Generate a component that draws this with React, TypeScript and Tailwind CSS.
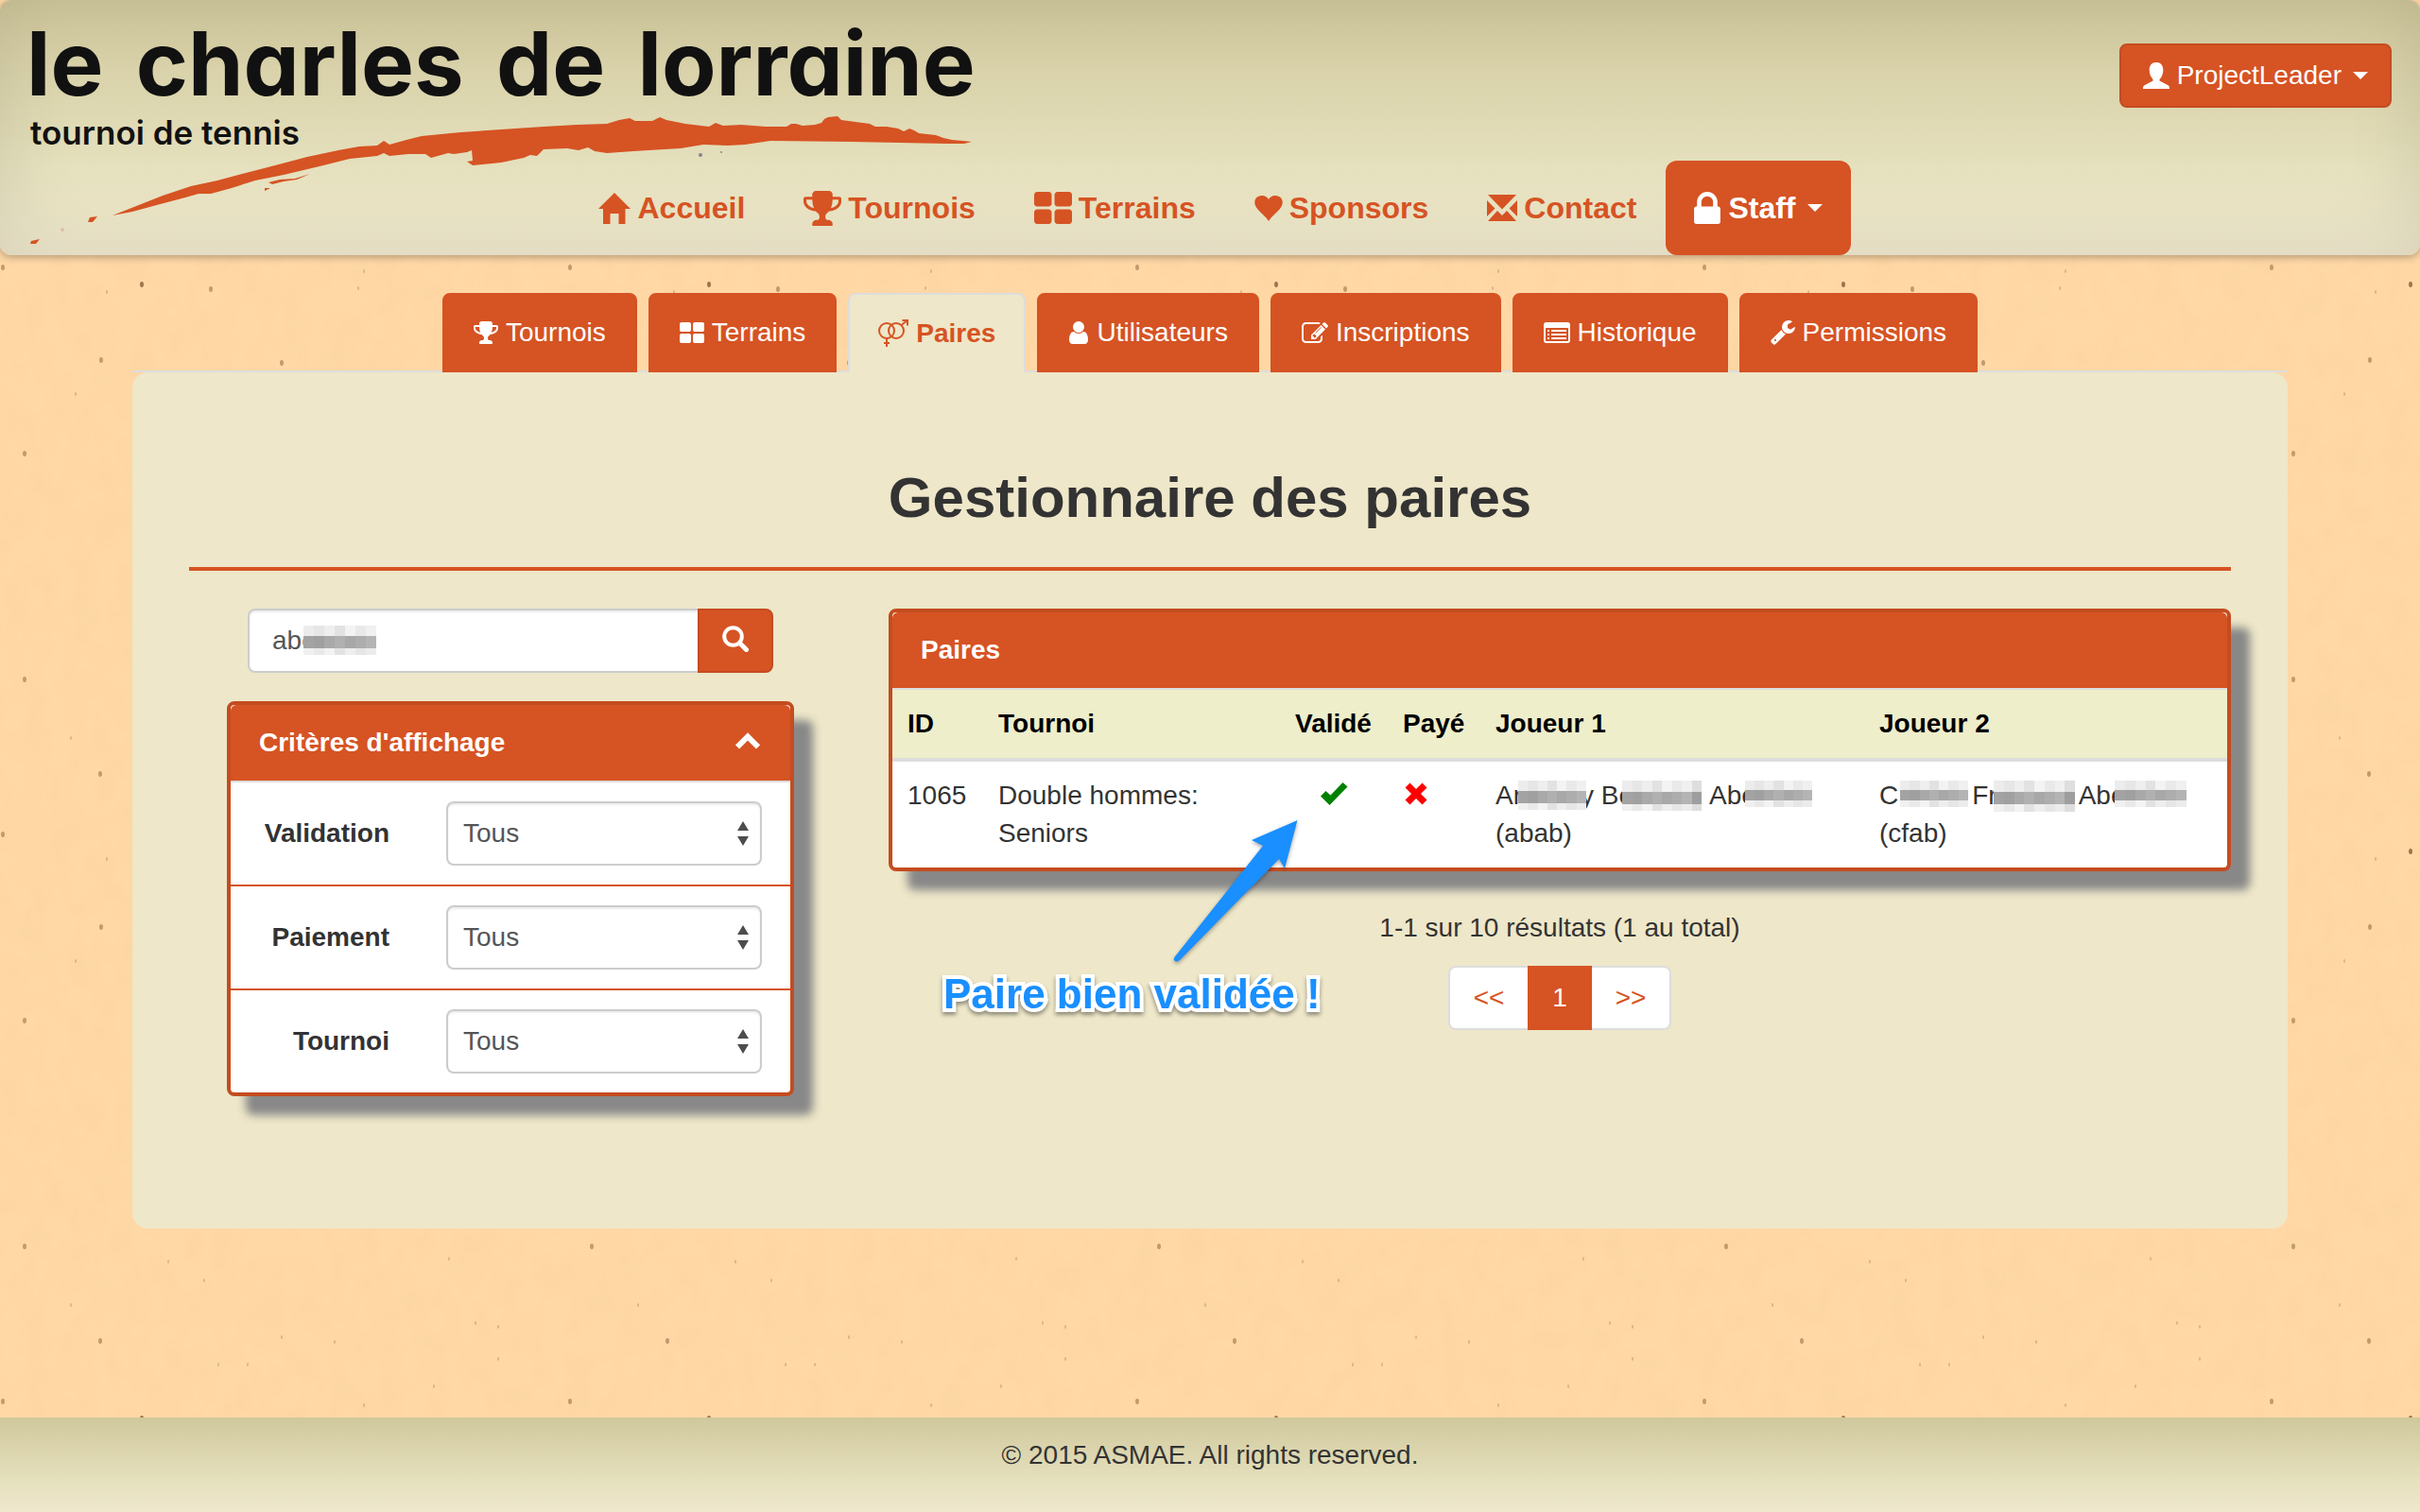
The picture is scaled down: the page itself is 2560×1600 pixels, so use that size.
import type { ReactNode } from "react";

const FA = {
  trophy:
    "M522 883q-74-162-74-371h-256v96q0 78 94.5 162t235.5 113zm1078-275v-96h-256q0 209-74 371 141-29 235.5-113t94.5-162zm128-128v128q0 71-41.500 143t-112 130-173 97.500-215.500 44.500q-42 54-95 95-38 34-52.500 72.500t-14.500 89.500q0 54 30.500 91t97.500 37q75 0 133.500 45.500t58.500 114.500v64q0 14-9 23t-23 9h-832q-14 0-23-9t-9-23v-64q0-69 58.500-114.500t133.500-45.500q67 0 97.500-37t30.500-91q0-51-14.500-89.500t-52.500-72.500q-53-41-95-95-113-5-215.500-44.500t-173-97.500-112-130-41.500-143v-128q0-40 28-68t68-28h288v-96q0-66 47-113t113-47h576q66 0 113 47t47 113v96h288q40 0 68 28t28 68z",
  grid:
    "M832 1024v384q0 52-38 90t-90 38h-512q-52 0-90-38t-38-90v-384q0-52 38-90t90-38h512q52 0 90 38t38 90zm0-768v384q0 52-38 90t-90 38h-512q-52 0-90-38t-38-90v-384q0-52 38-90t90-38h512q52 0 90 38t38 90zm896 768v384q0 52-38 90t-90 38h-512q-52 0-90-38t-38-90v-384q0-52 38-90t90-38h512q52 0 90 38t38 90zm0-768v384q0 52-38 90t-90 38h-512q-52 0-90-38t-38-90v-384q0-52 38-90t90-38h512q52 0 90 38t38 90z",
  lock:
    "M640 768h512v-192q0-106-75-181t-181-75-181 75-75 181v192zm832 96v576q0 40-28 68t-68 28h-960q-40 0-68-28t-28-68v-576q0-40 28-68t68-28h32v-192q0-184 132-316t316-132 316 132 132 316v192h32q40 0 68 28t28 68z",
  user:
    "M1536 1399q0 109-62.500 187t-150.500 78h-854q-88 0-150.500-78t-62.500-187q0-85 8.500-160.500t31.500-152 58.500-131 94-89 134.500-34.500q131 128 313 128t313-128q76 0 134.500 34.500t94 89 58.500 131 31.500 152 8.500 160.500zm-256-887q0 159-112.500 271.500t-271.500 112.500-271.500-112.500-112.500-271.500 112.500-271.500 271.500-112.500 271.500 112.500 112.500 271.500z",
  wrench:
    "M448 1472q0-26-19-45t-45-19-45 19-19 45 19 45 45 19 45-19 19-45zm644-420l-682 682q-37 37-90 37-52 0-91-37l-106-108q-38-36-38-90 0-53 38-91l681-681q39 98 114.500 173.500t173.500 114.500zm634-435q0 39-23 106-47 134-164.500 217.500t-258.500 83.500q-185 0-316.500-131.500t-131.500-316.500 131.500-316.500 316.500-131.500q58 0 121.500 16.500t107.500 46.500q16 11 16 28t-16 28l-293 169v224l193 107q5-3 79-48.500t135.500-81 70.500-35.500q15 0 23.500 10t8.500 25z",
  edit:
    "M888 1184l116-116-152-152-116 116v56h96v96h56zm440-720q-16-16-33 1l-350 350q-17 17-1 33t33-1l350-350q17-17 1-33zm80 594v190q0 119-84.500 203.500t-203.500 84.500h-832q-119 0-203.500-84.500t-84.500-203.500v-832q0-119 84.500-203.500t203.500-84.500h832q63 0 117 25 15 7 18 23 3 17-9 29l-49 49q-14 14-32 8-23-6-45-6h-832q-66 0-113 47t-47 113v832q0 66 47 113t113 47h832q66 0 113-47t47-113v-126q0-13 9-22l64-64q15-15 35-7t20 29zm-96-738l288 288-672 672h-288v-288zm444 132l-92 92-288-288 92-92q28-28 68-28t68 28l152 152q28 28 28 68t-28 68z",
  list:
    "M256 1152h128v128h-128zM256 896h128v128h-128zM256 640h128v128h-128zM512 1152h1024v128h-1024zM512 896h1024v128h-1024zM512 640h1024v128h-1024zM1664 1376v-832q0-13-9.500-22.500t-22.500-9.500h-1472q-13 0-22.500 9.500t-9.500 22.500v832q0 13 9.500 22.500t22.500 9.500h1472q13 0 22.500-9.500t9.500-22.500zm128-1088v1088q0 66-47 113t-113 47h-1472q-66 0-113-47t-47-113v-1088q0-66 47-113t113-47h1472q66 0 113 47t47 113z",
};

function Glyph({ d, box, className }: { d: string; box: string; className: string }) {
  return (
    <svg aria-hidden="true" viewBox={box} className={className} fill="currentColor" fillRule="evenodd">
      <path d={d} />
    </svg>
  );
}

const HomeIcon = () => (
  <Glyph className="h-[33px] w-[34px]" box="0 0 34 33" d="M17 0L34 17H28.500V33H21.500V22H12.500V33H5V17H0z" />
);
const HeartIcon = () => (
  <Glyph
    className="h-[27px] w-[30px]"
    box="0 0 30 27"
    d="M15 27C12 22 7 18.500 3.500 14.500C-1 9.500-.5 4 3 1.500C7-1.200 12.500-.3 15 4C17.500-.3 23-1.200 27 1.500C30.500 4 31 9.500 26.500 14.500C23 18.500 18 22 15 27z"
  />
);
const EnvelopeIcon = () => (
  <Glyph
    className="h-[28px] w-[32px]"
    box="0 0 32 28"
    d="M1 0H31L16 15.500zM0 6L8.500 14.500L0 23zM32 6L23.500 14.500L32 23zM1 28L11 17L14.500 20.500L16 22L17.500 20.500L21 17L31 28z"
  />
);
const PersonIcon = () => (
  <Glyph
    className="h-7 w-7"
    box="0 0 28 28"
    d="M14 0c-5 0-7.300 3.300-7.300 8 0 4 1.300 7.300 3.800 10v1.500L1.500 24.200Q0 25 0 27v1h28v-1q0-2-1.500-2.800L17.500 19.500V18c2.500-2.700 3.800-6 3.800-10 0-4.700-2.300-8-7.300-8z"
  />
);
const PairIcon = () => (
  <svg aria-hidden="true" viewBox="0 0 32 30" className="h-[30px] w-8" fill="none" stroke="currentColor" strokeWidth="2">
    <circle cx="9" cy="12" r="8" />
    <circle cx="19" cy="12" r="8" />
    <path d="M24.500 6L31 1M25.500 1H31V6.500M9 20V29M6 25H12" />
  </svg>
);
const Caret = () => (
  <svg aria-hidden="true" viewBox="0 0 16 8" className="ml-1 h-2 w-4" fill="currentColor">
    <path d="M0 0H16L8 8z" />
  </svg>
);

const NAV: { label: string; icon: ReactNode; staff?: boolean }[] = [
  { label: "Accueil", icon: <HomeIcon /> },
  { label: "Tournois", icon: <Glyph d={FA.trophy} box="64 128 1664 1536" className="h-[37px] w-10" /> },
  { label: "Terrains", icon: <Glyph d={FA.grid} box="64 128 1664 1408" className="h-[34px] w-10" /> },
  { label: "Sponsors", icon: <HeartIcon /> },
  { label: "Contact", icon: <EnvelopeIcon /> },
  { label: "Staff", icon: <Glyph d={FA.lock} box="320 128 1152 1408" className="h-[34px] w-7" />, staff: true },
];

const TABS: { label: string; icon: ReactNode; active?: boolean }[] = [
  { label: "Tournois", icon: <Glyph d={FA.trophy} box="64 128 1664 1536" className="h-6 w-[26px]" /> },
  { label: "Terrains", icon: <Glyph d={FA.grid} box="64 128 1664 1408" className="h-[22px] w-[26px]" /> },
  { label: "Paires", icon: <PairIcon />, active: true },
  { label: "Utilisateurs", icon: <Glyph d={FA.user} box="256 128 1280 1536" className="h-6 w-[22px]" /> },
  { label: "Inscriptions", icon: <Glyph d={FA.edit} box="0 128 1792 1408" className="h-[22px] w-7" /> },
  { label: "Historique", icon: <Glyph d={FA.list} box="0 128 1792 1408" className="h-[22px] w-7" /> },
  { label: "Permissions", icon: <Glyph d={FA.wrench} box="64 128 1664 1664" className="h-[26px] w-[26px]" /> },
];

const SPECKS: [number, number, number][] = [
  [26, 119, 3], [178, 135, 1], [216, 155, 2], [106, 219, 3], [298, 215, 2], [231, 244, 2], [262, 244, 1],
  [385, 287, 2], [475, 132, 2], [527, 204, 1], [527, 238, 1], [503, 200, 1], [459, 267, 1], [3, 283, 3],
  [150, 301, 4], [223, 306, 3], [379, 305, 2], [354, 220, 1], [107, 381, 3], [298, 384, 3], [113, 309, 2],
  [26, 480, 3], [75, 181, 1], [340, 560, 1], [520, 430, 1], [410, 60, 1], [80, 417, 1],
];

function Paper() {
  return (
    <svg aria-hidden="true" className="absolute inset-0 -z-10 h-full w-full">
      <defs>
        <filter id="grain" x="0" y="0" width="100%" height="100%">
          <feTurbulence type="fractalNoise" baseFrequency="0.04 0.03" numOctaves="4" seed="4" />
          <feColorMatrix values="0 0 0 0 0.93  0 0 0 0 0.64  0 0 0 0 0.34  0.8 0 0 0 -0.28" />
        </filter>
        <pattern id="specks" width="600" height="600" patternUnits="userSpaceOnUse">
          {SPECKS.map(([x, y, r]) => (
            <ellipse
              key={`${x}-${y}`}
              cx={x}
              cy={y}
              rx={r > 2 ? 2 : 1}
              ry={r > 2 ? 3 : 2}
              fill="#8a5a34"
              opacity={r > 3 ? 0.8 : r > 2 ? 0.5 : 0.3}
            />
          ))}
        </pattern>
      </defs>
      <rect width="100%" height="100%" fill="#ffd8a6" />
      <rect width="100%" height="100%" filter="url(#grain)" />
      <rect width="100%" height="100%" fill="url(#specks)" />
    </svg>
  );
}

function Brush() {
  return (
    <svg aria-hidden="true" viewBox="0 0 1040 270" className="pointer-events-none absolute top-0 left-0 h-[270px] w-[1040px]" fill="#d65323">
      <path d="M119 228L172 207L202 197L230 191L260 183L291 175L325 166L358 159L380 155L399 154L406 149L412 153L430 148L446 144L487 140L530 137L575 134L610 132L642 131L655 127L666 125L672 128L690 128L698 124L705 127L725 131L750 134L757 130L765 133L784 132L810 134L832 134L837 131L842 131L849 133L862 132L869 130L872 126L876 124L886 123L890 127L905 129L920 131L926 134L938 134L950 136L956 139L962 136L967 138L972 141L990 143L998 146L1007 148L1028 150L1020 152L1001 152L900 150L815 149L788 153L770 154L744 153L720 157L703 158L670 160L642 162L629 160L622 156L612 159L600 157L575 158L568 165L561 164L554 167L530 172L500 175L494 171L500 170L499 159L494 161L480 163L474 162L456 167L450 163L432 163L412 165L406 162L399 165L370 168L338 176L300 185L270 191L245 199L223 205L210 205L196 209L162 218L140 224z" />
      <path d="M284 193L296 190L312 189L328 184L314 190L300 192L288 195zM280 199L286 199L280 202zM95 230L103 229L98 235L93 235zM33 255L42 253L38 258L32 258z" />
      <circle cx="741" cy="164" r="2" fill="#8d7f92" />
      <circle cx="763" cy="161" r="1" fill="#8d7f92" />
      <circle cx="66" cy="243" r="2" fill="#dcbfae" />
    </svg>
  );
}

const SHADES = ["#b0b0b0", "#a3a3a3", "#adadad", "#a9a9a9", "#9e9e9e", "#a8a8a8", "#a0a0a0", "#b4b4b4"];
const LIGHTS = ["#ececec", "#e2e2e2", "#f0f0f0", "#e6e6e6", "#f3f3f3", "#dedede", "#eeeeee", "#e9e9e9"];

function Mosaic({ cols, className }: { cols: number; className: string }) {
  const cells = Array.from({ length: cols }, (_, i) => i);
  return (
    <svg aria-hidden="true" viewBox={`0 0 ${cols * 11} 30`} preserveAspectRatio="none" className={className} shapeRendering="crispEdges">
      {cells.map((i) => (
        <g key={i}>
          <rect x={i * 11} y="0" width="11" height="11" fill={LIGHTS[(i * 3) % 8]} />
          <rect x={i * 11} y="11" width="11" height="12" fill={SHADES[(i * 5 + 1) % 8]} />
          <rect x={i * 11} y="23" width="11" height="7" fill={LIGHTS[(i * 5 + 2) % 8]} />
        </g>
      ))}
    </svg>
  );
}

function FilterRow({ id, label }: { id: string; label: string }) {
  return (
    <div className="flex items-center px-[30px] py-5 not-first:border-t-2 not-first:border-[#d65323]">
      <label htmlFor={id} className="w-[138px] text-right font-bold">
        {label}
      </label>
      <div className="relative ml-[60px] flex-1">
        <select
          id={id}
          className="h-[68px] w-full appearance-none rounded-lg border-2 border-[#ccc] bg-white px-4 text-[#555] shadow-[inset_0_2px_2px_rgba(0,0,0,0.075)]"
        >
          <option>Tous</option>
        </select>
        <svg aria-hidden="true" viewBox="0 0 12 26" className="pointer-events-none absolute top-[21px] right-[14px] h-[26px] w-3" fill="#4d4d4d">
          <path d="M6 0L12 10H0zM0 16H12L6 26z" />
        </svg>
      </div>
    </div>
  );
}

const PANEL = "rounded-lg border-4 border-[#c44c20] bg-white shadow-[20px_20px_10px_#888]";
const PANEL_HEAD = "flex items-center justify-between rounded-t-[6px] border-b-2 border-[#ddd] bg-[#d65323] px-[30px] py-5 font-bold text-white";

export default function App() {
  return (
    <div className="relative isolate flex min-h-screen flex-col font-['Liberation_Sans',Arial,sans-serif] text-[28px] leading-10 text-[#333]">
      <Paper />

      <header className="relative rounded-xl bg-linear-to-b from-[#d0c89c] via-[#e5e0bd] via-65% to-[#efe8cd] shadow-[0_2px_8px_rgba(0,0,0,0.3),inset_0_0_80px_rgba(0,0,0,0.1)]">
        <Brush />
        <div className="flex h-[170px] items-start justify-between pr-[30px] pl-[28px]">
          <a href="#accueil" className="relative block pt-3 font-['Inter',sans-serif] text-[#111] [font-feature-settings:'cv11']">
            <span className="block text-[94px] leading-[110px] font-bold">
              <span className="mr-3">le</span> <span className="mr-3">charles</span> <span className="mr-3">de</span> lorraine
            </span>
            <span className="block pl-1 text-[35px] leading-[36px] font-semibold">tournoi de tennis</span>
          </a>
          <button
            type="button"
            className="mt-[46px] flex h-[68px] items-center gap-2 rounded-lg border-2 border-[#c44c20] bg-[#d65323] px-[23px] text-white"
          >
            <PersonIcon />
            ProjectLeader
            <Caret />
          </button>
        </div>
        <nav className="relative flex justify-center">
          {NAV.map(({ label, icon, staff }) => (
            <a
              key={label}
              href={`#${label.toLowerCase()}`}
              className={
                staff
                  ? "flex items-center gap-2 rounded-xl bg-[#d65323] px-[30px] py-[30px] text-[32px] font-bold text-white"
                  : "flex items-center gap-[7px] px-[31px] py-[30px] text-[32px] font-bold text-[#d65323]"
              }
            >
              {icon}
              {label}
              {staff && <Caret />}
            </a>
          ))}
        </nav>
      </header>

      <main className="mx-[140px] mt-10 mb-[200px]">
        <div className="flex justify-center gap-3 border-b-2 border-[#ddd]">
          {TABS.map(({ label, icon, active }) => (
            <a
              key={label}
              href={`#gestion-${label.toLowerCase()}`}
              className={
                active
                  ? "-mb-[2px] flex items-center gap-2 rounded-t-lg border-2 border-b-0 border-[#ddd] bg-[#eee7c9] px-[30px] py-5 font-bold text-[#d65323]"
                  : "-mb-[2px] flex items-center gap-2 rounded-t-lg border-2 border-[#d65323] bg-[#d65323] px-[31px] py-5 text-white"
              }
            >
              {icon}
              {label}
            </a>
          ))}
        </div>

        <section className="rounded-2xl bg-[#eee7c9] px-[60px] pt-[100px] pb-[140px]">
          <h1 className="border-b-4 border-[#d65323] pb-[40px] text-center text-[60px] leading-[66px] font-bold">
            Gestionnaire des paires
          </h1>

          <div className="mt-10 grid grid-cols-[600px_1fr] items-start gap-[100px] pl-10">
            <div>
              <form className="flex px-[22px]" onSubmit={(e) => e.preventDefault()}>
                <div className="relative flex-1">
                  <input
                    type="text"
                    aria-label="Rechercher"
                    defaultValue="abe"
                    className="h-[68px] w-full rounded-l-lg border-2 border-r-0 border-[#ccc] bg-white px-6 text-[#555] shadow-[inset_0_2px_2px_rgba(0,0,0,0.075)]"
                  />
                  <Mosaic cols={7} className="absolute top-[18px] left-[59px] h-[31px] w-[77px]" />
                </div>
                <button
                  type="submit"
                  aria-label="Lancer la recherche"
                  className="flex h-[68px] w-20 items-center justify-center rounded-r-lg border-2 border-[#c44c20] bg-[#d65323] pb-1 text-white"
                >
                  <svg aria-hidden="true" viewBox="0 0 28 28" className="h-7 w-7" fill="none" stroke="currentColor">
                    <circle cx="11.500" cy="11.500" r="9.300" strokeWidth="4" />
                    <path d="M18.500 18.500L25.500 25.500" strokeWidth="5" strokeLinecap="round" />
                  </svg>
                </button>
              </form>

              <section className={`mt-[30px] ${PANEL}`}>
                <h2 className={PANEL_HEAD}>
                  Critères d'affichage
                  <button type="button" aria-label="Réduire" className="pr-[2px] pb-1 text-white">
                    <svg aria-hidden="true" viewBox="0 0 26 18" className="h-[18px] w-[26px]" fill="none" stroke="currentColor" strokeWidth="6">
                      <path d="M2 15.500L13 4.500L24 15.500" />
                    </svg>
                  </button>
                </h2>
                <div>
                  <FilterRow id="validation" label="Validation" />
                  <FilterRow id="paiement" label="Paiement" />
                  <FilterRow id="tournoi" label="Tournoi" />
                </div>
              </section>
            </div>

            <div className="relative">
              <section className={PANEL}>
                <h2 className={PANEL_HEAD}>Paires</h2>
                <table className="w-full table-fixed border-collapse text-left">
                  <colgroup>
                    <col className="w-[96px]" />
                    <col className="w-[314px]" />
                    <col className="w-[114px]" />
                    <col className="w-[98px]" />
                    <col className="w-[406px]" />
                    <col />
                  </colgroup>
                  <thead className="border-b-4 border-[#ddd] bg-[#eeeecb] text-black">
                    <tr>
                      {["ID", "Tournoi", "Validé", "Payé", "Joueur 1", "Joueur 2"].map((h) => (
                        <th key={h} className="p-4 font-bold whitespace-nowrap">
                          {h}
                        </th>
                      ))}
                    </tr>
                  </thead>
                  <tbody>
                    <tr className="align-top">
                      <td className="p-4">1065</td>
                      <td className="p-4">Double hommes: Seniors</td>
                      <td className="p-4">
                        <svg role="img" aria-label="oui" viewBox="0 0 29 24" className="mx-auto mt-[6px] h-6 w-[29px]" fill="#008000">
                          <path d="M0 14.500L5.500 9L10.500 13.500L23.500 0L28.500 4.500L9.500 24z" />
                        </svg>
                      </td>
                      <td className="p-4">
                        <svg role="img" aria-label="non" viewBox="0 0 24 24" className="mt-[6px] ml-[2px] h-6 w-6" stroke="#f00" strokeWidth="7">
                          <path d="M3 3L21 21M21 3L3 21" />
                        </svg>
                      </td>
                      <td className="p-4">
                        <div className="flex whitespace-nowrap">
                          <span>Ar</span>
                          <Mosaic cols={7} className="relative -ml-1 mt-1 h-[31px] w-[72px] flex-none" />
                          <span className="-ml-[6px]">y Be</span>
                          <Mosaic cols={8} className="relative -ml-3 mt-1 h-[32px] w-[84px] flex-none" />
                          <span className="ml-2">Abe</span>
                          <Mosaic cols={7} className="relative -ml-3 mt-1 h-[28px] w-[71px] flex-none" />
                        </div>
                        (abab)
                      </td>
                      <td className="p-4">
                        <div className="flex whitespace-nowrap">
                          <span>C</span>
                          <Mosaic cols={7} className="relative ml-[2px] mt-1 h-[28px] w-[72px] flex-none" />
                          <span className="ml-1">Fr</span>
                          <Mosaic cols={8} className="relative -ml-1 mt-1 h-[33px] w-[86px] flex-none" />
                          <span className="ml-1">Abe</span>
                          <Mosaic cols={7} className="relative -ml-3 mt-1 h-[28px] w-[76px] flex-none" />
                        </div>
                        (cfab)
                      </td>
                    </tr>
                  </tbody>
                </table>
              </section>

              <p className="mt-10 text-center">1-1 sur 10 résultats (1 au total)</p>
              <nav aria-label="Pagination" className="mt-5 flex justify-center text-[#d65323]">
                <a href="#precedent" className="flex h-[68px] w-[84px] items-center justify-center rounded-l-lg border-2 border-r-0 border-[#ddd] bg-white">
                  &lt;&lt;
                </a>
                <a href="#page-1" aria-current="page" className="flex h-[68px] w-[68px] items-center justify-center bg-[#d65323] text-white">
                  1
                </a>
                <a href="#suivant" className="flex h-[68px] w-[84px] items-center justify-center rounded-r-lg border-2 border-l-0 border-[#ddd] bg-white">
                  &gt;&gt;
                </a>
              </nav>

              <svg
                aria-hidden="true"
                viewBox="0 0 134 152"
                className="pointer-events-none absolute top-[223px] left-[300px] h-[152px] w-[134px] overflow-visible drop-shadow-[0_2px_2px_rgba(0,0,0,0.35)]"
                fill="#1a8fff"
              >
                <path d="M132.500 1L119 52L113 42L8 149Q4 152 2 149Q1 147 4 144L96 28L84 22z" />
              </svg>
              <p className="absolute top-[384px] left-[58px] text-[44px] leading-[48px] font-bold whitespace-nowrap text-[#1a8fff] drop-shadow-[0_3px_2px_rgba(0,0,0,0.4)] [-webkit-text-stroke:8px_white] [paint-order:stroke]">
                Paire bien validée !
              </p>
            </div>
          </div>
        </section>
      </main>

      <footer className="mt-auto bg-linear-to-b from-[#d0c89c] via-[#e5e0bd] via-65% to-[#efe8cd] px-5 pt-5 pb-10 text-center">
        © 2015 ASMAE. All rights reserved.
      </footer>
    </div>
  );
}
